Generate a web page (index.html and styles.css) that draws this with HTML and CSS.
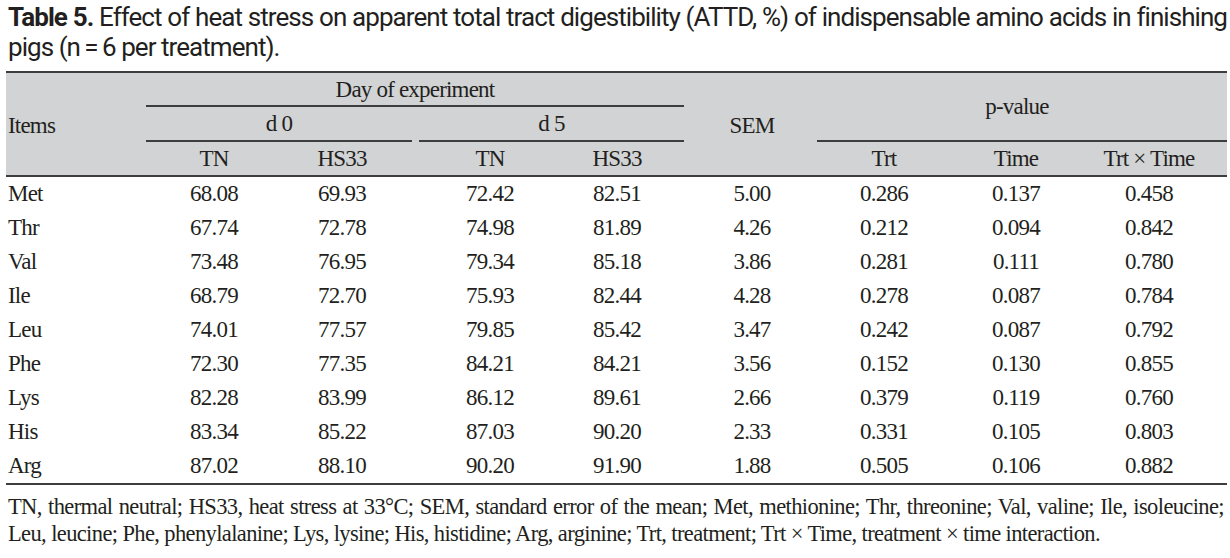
FILE: index.html
```html
<!DOCTYPE html>
<html lang="en">
<head>
<meta charset="utf-8">
<title>Table 5</title>
<link rel="stylesheet" href="styles.css">
</head>
<body>
<div class="page">
  <h1 class="title">
    <span class="tline tline-full"><b>Table 5.</b> Effect of heat stress on apparent total tract digestibility (ATTD, %) of indispensable amino acids in finishing</span>
    <span class="tline">pigs (n&thinsp;=&thinsp;6 per treatment).</span>
  </h1>

  <div class="grid thead">
    <div class="h items">Items</div>
    <div class="h day rule">Day of experiment</div>
    <div class="h sem">SEM</div>
    <div class="h pval rule">p-value</div>
    <div class="h d0 rule">d 0</div>
    <div class="h d5 rule">d 5</div>
    <div class="h r3 c2">TN</div>
    <div class="h r3 c3">HS33</div>
    <div class="h r3 c5">TN</div>
    <div class="h r3 c6">HS33</div>
    <div class="h r3 c8">Trt</div>
    <div class="h r3 c9">Time</div>
    <div class="h r3 c10">Trt × Time</div>
  </div>

  <div class="tbody">
    <div class="grid row"><div class="name">Met</div><div>68.08</div><div>69.93</div><div>72.42</div><div>82.51</div><div>5.00</div><div>0.286</div><div>0.137</div><div>0.458</div></div>
    <div class="grid row"><div class="name">Thr</div><div>67.74</div><div>72.78</div><div>74.98</div><div>81.89</div><div>4.26</div><div>0.212</div><div>0.094</div><div>0.842</div></div>
    <div class="grid row"><div class="name">Val</div><div>73.48</div><div>76.95</div><div>79.34</div><div>85.18</div><div>3.86</div><div>0.281</div><div>0.111</div><div>0.780</div></div>
    <div class="grid row"><div class="name">Ile</div><div>68.79</div><div>72.70</div><div>75.93</div><div>82.44</div><div>4.28</div><div>0.278</div><div>0.087</div><div>0.784</div></div>
    <div class="grid row"><div class="name">Leu</div><div>74.01</div><div>77.57</div><div>79.85</div><div>85.42</div><div>3.47</div><div>0.242</div><div>0.087</div><div>0.792</div></div>
    <div class="grid row"><div class="name">Phe</div><div>72.30</div><div>77.35</div><div>84.21</div><div>84.21</div><div>3.56</div><div>0.152</div><div>0.130</div><div>0.855</div></div>
    <div class="grid row"><div class="name">Lys</div><div>82.28</div><div>83.99</div><div>86.12</div><div>89.61</div><div>2.66</div><div>0.379</div><div>0.119</div><div>0.760</div></div>
    <div class="grid row"><div class="name">His</div><div>83.34</div><div>85.22</div><div>87.03</div><div>90.20</div><div>2.33</div><div>0.331</div><div>0.105</div><div>0.803</div></div>
    <div class="grid row"><div class="name">Arg</div><div>87.02</div><div>88.10</div><div>90.20</div><div>91.90</div><div>1.88</div><div>0.505</div><div>0.106</div><div>0.882</div></div>
  </div>

  <div class="notes">
    <span class="nline nline-full">TN, thermal neutral; HS33, heat stress at 33°C; SEM, standard error of the mean; Met, methionine; Thr, threonine; Val, valine; Ile, isoleucine;</span>
    <span class="nline">Leu, leucine; Phe, phenylalanine; Lys, lysine; His, histidine; Arg, arginine; Trt, treatment; Trt × Time, treatment × time interaction.</span>
  </div>
</div>
</body>
</html>
```

FILE: styles.css
```css
* { box-sizing: border-box; }

html, body {
  margin: 0;
  padding: 0;
  background: #ffffff;
}

body {
  color: #231f20;
  font-family: "Liberation Serif", "Times New Roman", serif;
}

.page {
  width: 1230px;
  padding: 2px 3px 0 6px;
}

.title {
  margin: 0 0 9px 0;
  padding-left: 2px;
  font-family: Roboto, "Open Sans", sans-serif;
  font-weight: 400;
  font-size: 26px;
  line-height: 30px;
  letter-spacing: -0.95px;
  color: #231f20;
}

.title b {
  font-weight: 700;
}

.tline {
  display: block;
  white-space: nowrap;
}

.tline-full {
  text-align: justify;
  text-align-last: justify;
}

.grid {
  display: grid;
  grid-template-columns: 142px 132px 124px 20px 132px 122px 148px 116px 148px 118px 19px;
}

.thead {
  background: #d1d3d4;
  border-top: 2px solid #3d3d3d;
  border-bottom: 2px solid #3d3d3d;
  grid-template-rows: 34px 35px 33px;
  font-size: 23px;
  letter-spacing: -0.8px;
}

.h {
  display: flex;
  align-items: center;
  justify-content: center;
  white-space: nowrap;
  padding-top: 1px;
}

.items {
  grid-column: 1;
  grid-row: 1 / 4;
  justify-content: flex-start;
  padding-left: 2px;
  padding-top: 4px;
}

.rule {
  border-bottom: 2px solid #3d3d3d;
}

.day {
  grid-column: 2 / 7;
  grid-row: 1;
  margin-left: -2px;
  margin-right: -6px;
}

.sem {
  grid-column: 7;
  grid-row: 1 / 4;
  padding-top: 4px;
}

.pval {
  grid-column: 8 / 12;
  grid-row: 1 / 3;
  margin-left: -9px;
  padding-right: 10px;
}

.d0 {
  grid-column: 2 / 4;
  grid-row: 2;
  margin-left: -2px;
  margin-right: -8px;
}

.d5 {
  grid-column: 4 / 7;
  grid-row: 2;
  margin-left: 15px;
  margin-right: -6px;
}

.r3 { grid-row: 3; }
.c2 { grid-column: 2; }
.c3 { grid-column: 3; }
.c5 { grid-column: 5; }
.c6 { grid-column: 6; }
.c8 { grid-column: 8; }
.c9 { grid-column: 9; }
.c10 { grid-column: 10; }

.tbody {
  border-bottom: 2px solid #3d3d3d;
  font-size: 23px;
  letter-spacing: -0.8px;
}

.row {
  height: 34px;
  align-items: center;
}

.row > div {
  text-align: center;
  white-space: nowrap;
}

.row > .name {
  text-align: left;
  padding-left: 2px;
}

.row > :nth-child(4) {
  grid-column: 5;
}

.notes {
  padding: 8px 3px 0 2px;
  font-size: 22.5px;
  line-height: 27px;
  letter-spacing: -0.62px;
}

.nline {
  display: block;
  white-space: nowrap;
}

.nline-full {
  text-align: justify;
  text-align-last: justify;
}
```
